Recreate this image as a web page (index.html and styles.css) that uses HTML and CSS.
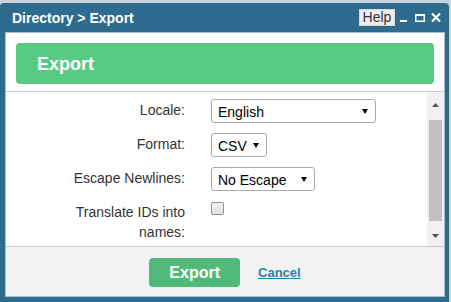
FILE: index.html
```html
<!DOCTYPE html>
<html>
<head>
<meta charset="utf-8">
<link rel="stylesheet" href="styles.css">
</head>
<body>
<div class="dialog">
  <div class="titlebar">
    <span class="title">Directory &gt; Export</span>
    <div class="win-tools">
      <span class="help">Help</span>
      <svg class="ico ico-min" width="7" height="17" viewBox="0 0 7 17"><rect x="0" y="11" width="7" height="2" fill="#fff"/></svg>
      <svg class="ico ico-max" width="10" height="17" viewBox="0 0 10 17"><rect x="0.75" y="5.75" width="8.5" height="6.5" fill="none" stroke="#fff" stroke-width="1.5"/><rect x="0" y="5" width="10" height="2" fill="#fff"/></svg>
      <svg class="ico ico-close" width="10" height="17" viewBox="0 0 10 17"><path d="M1 4.5 L9 12.5 M9 4.5 L1 12.5" stroke="#fff" stroke-width="2.2" fill="none"/></svg>
    </div>
  </div>
  <div class="panel">
    <div class="panel-head">
      <div class="green-title">Export</div>
    </div>
    <div class="content">
      <div class="form">
        <div class="row">
          <label class="lbl">Locale:</label>
          <div class="sel sel-locale"><span>English</span><svg width="6" height="5" viewBox="0 0 6 5"><path d="M0 0 H6 L3 5 Z" fill="#000"/></svg></div>
        </div>
        <div class="row">
          <label class="lbl">Format:</label>
          <div class="sel sel-format"><span>CSV</span><svg width="6" height="5" viewBox="0 0 6 5"><path d="M0 0 H6 L3 5 Z" fill="#000"/></svg></div>
        </div>
        <div class="row">
          <label class="lbl">Escape Newlines:</label>
          <div class="sel sel-escape"><span>No Escape</span><svg width="6" height="5" viewBox="0 0 6 5"><path d="M0 0 H6 L3 5 Z" fill="#000"/></svg></div>
        </div>
        <div class="row">
          <label class="lbl">Translate IDs into names:</label>
          <div class="cb"></div>
        </div>
      </div>
      <div class="scrollbar">
        <div class="sb-up"><svg width="7" height="4" viewBox="0 0 7 4"><path d="M0 4 L3.5 0 L7 4 Z" fill="#505050"/></svg></div>
        <div class="sb-thumb"></div>
        <div class="sb-fill"></div>
        <div class="sb-down"><svg width="7" height="4" viewBox="0 0 7 4"><path d="M0 0 L7 0 L3.5 4 Z" fill="#505050"/></svg></div>
      </div>
    </div>
    <div class="footer">
      <span class="btn-export">Export</span>
      <a class="cancel" href="#">Cancel</a>
    </div>
  </div>
</div>
</body>
</html>
```
FILE: styles.css
```css
html, body {
  margin: 0;
  padding: 0;
}
body {
  background: #c9d2db;
  font-family: "Liberation Sans", Arial, sans-serif;
  width: 451px;
  height: 302px;
  overflow: hidden;
}
.dialog {
  margin-top: 3px;
  width: 449px;
  height: 299px;
  box-sizing: border-box;
  background: #2e6b8e;
  border-radius: 4px 4px 0 0;
  padding: 0 4px 5px 5px;
  display: flex;
  flex-direction: column;
}
.titlebar {
  height: 29px;
  flex: 0 0 29px;
  display: flex;
  align-items: center;
  padding-left: 7px;
  padding-right: 4px;
}
.title {
  color: #fff;
  font-weight: bold;
  font-size: 14px;
  line-height: 16px;
  flex: 1;
}
.win-tools {
  display: flex;
  align-items: center;
}
.help {
  display: block;
  width: 36px;
  height: 17px;
  box-sizing: border-box;
  background: #eeeeee;
  border: 1px solid #d6d6d6;
  color: #333;
  font-size: 14px;
  line-height: 15px;
  text-align: center;
}
.ico {
  display: block;
}
.ico-min { margin-left: 5px; }
.ico-max { margin-left: 8px; }
.ico-close { margin-left: 6px; }
.panel {
  flex: 1;
  background: #fff;
  border: 1px solid #a9bfcf;
  display: flex;
  flex-direction: column;
  min-height: 0;
}
.panel-head {
  padding: 10px 10px 7px 10px;
  border-bottom: 1px solid #cccccc;
}
.green-title {
  height: 41px;
  background: #57cb84;
  border-radius: 4px;
  color: #fff;
  font-weight: bold;
  font-size: 18px;
  line-height: 20px;
  display: flex;
  align-items: center;
  padding-left: 21px;
}
.content {
  flex: 0 0 154px;
  display: flex;
  border-bottom: 1px solid #cccccc;
}
.form {
  flex: 1;
  overflow: hidden;
  padding: 7px 0 0 59px;
  display: grid;
  grid-template-columns: 120px auto;
  column-gap: 26px;
  row-gap: 10px;
  align-content: start;
  justify-content: start;
}
.row {
  display: contents;
}
.lbl {
  text-align: right;
  color: #333;
  font-size: 14px;
  line-height: 20px;
  padding-top: 1px;
}
.sel {
  height: 24px;
  box-sizing: border-box;
  border: 1px solid #a9a9a9;
  border-radius: 3px;
  padding: 1px 7px 0 6px;
  display: flex;
  align-items: center;
  justify-content: space-between;
  font-size: 14px;
  line-height: 16px;
  color: #000;
  justify-self: start;
}
.sel svg { display: block; }
.sel-locale { width: 165px; }
.sel-format { width: 56px; }
.sel-escape { width: 104px; }
.cb {
  width: 13px;
  height: 13px;
  box-sizing: border-box;
  margin-top: 1px;
  border: 1px solid #929292;
  border-radius: 2px;
  background: linear-gradient(#f2f2f2, #e2e2e2);
}
.scrollbar {
  flex: 0 0 17px;
  background: #f1f1f1;
  display: flex;
  flex-direction: column;
  align-items: center;
}
.sb-up {
  padding-top: 11px;
  height: 4px;
}
.sb-up svg, .sb-down svg { display: block; }
.sb-thumb {
  margin-top: 13px;
  width: 13px;
  height: 101px;
  background: #c1c1c1;
}
.sb-fill { flex: 1; }
.sb-down {
  padding-bottom: 8px;
  height: 4px;
}
.footer {
  flex: 1;
  background: #f2f2f2;
  display: flex;
  justify-content: center;
  align-items: flex-start;
  padding-top: 11px;
  gap: 18px;
}
.btn-export {
  display: flex;
  align-items: center;
  height: 29px;
  box-sizing: border-box;
  padding: 0 20px;
  background: #51ba7a;
  border-radius: 4px;
  color: #fff;
  font-weight: bold;
  font-size: 16px;
  line-height: 18px;
}
.cancel {
  height: 29px;
  display: flex;
  align-items: center;
  color: #1b84af;
  font-weight: bold;
  font-size: 13px;
  line-height: 15px;
  text-decoration: underline;
}
```
